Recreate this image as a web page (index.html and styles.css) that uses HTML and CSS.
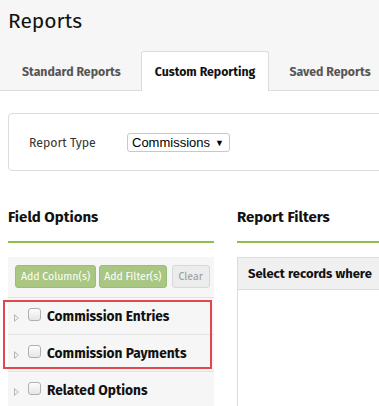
FILE: index.html
```html
<!DOCTYPE html>
<html>
<head>
<meta charset="utf-8">
<link rel="stylesheet" href="styles.css">
</head>
<body>
<div class="top">
  <h1 class="title">Reports</h1>
  <div class="tabs">
    <div class="tab">Standard Reports</div>
    <div class="tab active">Custom Reporting</div>
    <div class="tab">Saved Reports</div>
  </div>
</div>
<div class="content">
  <div class="type-box">
    <span class="type-label">Report Type</span>
    <span class="select">Commissions <span class="arrow">▼</span></span>
  </div>
  <div class="columns">
    <div class="col-left">
      <h2 class="heading">Field Options</h2>
      <div class="panel">
        <div class="btn-row">
          <span class="btn green">Add Column(s)</span>
          <span class="btn green">Add Filter(s)</span>
          <span class="btn grey">Clear</span>
        </div>
        <div class="row"><span class="tri"></span><span class="cb"></span><span class="lbl">Commission Entries</span></div>
        <div class="row"><span class="tri"></span><span class="cb"></span><span class="lbl">Commission Payments</span></div>
        <div class="row"><span class="tri"></span><span class="cb"></span><span class="lbl">Related Options</span></div>
        <div class="highlight"></div>
      </div>
    </div>
    <div class="col-right">
      <h2 class="heading">Report Filters</h2>
      <div class="filter-panel">
        <div class="filter-head">Select records where</div>
      </div>
    </div>
  </div>
</div>
</body>
</html>
```
FILE: styles.css
```css
html, body {
  margin: 0;
  padding: 0;
  background: #fff;
  font-family: "Fira Sans", Lato, "Open Sans", sans-serif;
  overflow: hidden;
}
.top {
  background: #f6f6f6;
  padding: 8px 0 0 8px;
  border-bottom: 1px solid #dcdcdc;
}
.title {
  margin: 0;
  font-size: 21px;
  font-weight: 400;
  line-height: 26px;
  color: #111;
}
.tabs {
  display: flex;
  margin-top: 17px;
  margin-bottom: -1px;
  white-space: nowrap;
}
.tab {
  padding: 0 13px;
  margin-right: 6px;
  height: 38px;
  line-height: 40px;
  font-size: 12.3px;
  font-weight: 700;
  color: #555;
  border: 1px solid transparent;
  border-bottom: none;
}
.tab.active {
  background: #fff;
  color: #111;
  border-color: #dcdcdc;
  border-radius: 3px 3px 0 0;
  height: 39px;
}
.content {
  padding: 22px 0 0 8px;
}
.type-box {
  width: 420px;
  height: 56px;
  border: 1px solid #dcdcdc;
  border-radius: 4px;
  display: flex;
  align-items: center;
  box-sizing: content-box;
}
.type-label {
  margin-left: 20px;
  width: 98px;
  font-size: 12.3px;
  color: #333;
}
.select {
  display: inline-flex;
  align-items: center;
  height: 17px;
  padding: 0 5px 0 4px;
  border: 1px solid #c8c8c8;
  border-radius: 3px;
  font-family: "Liberation Sans", Arial, sans-serif;
  font-size: 13px;
  color: #000;
  background: #fff;
  margin-top: 1px;
}
.arrow {
  font-size: 9px;
  margin-left: 5px;
}
.columns {
  display: flex;
  gap: 23px;
  margin-top: 36px;
}
.col-left {
  width: 206px;
  flex: none;
}
.col-right {
  flex: none;
  width: 200px;
}
.heading {
  margin: 0;
  font-size: 15px;
  font-weight: 700;
  line-height: 20px;
  color: #111;
  padding-bottom: 14px;
  border-bottom: 2px solid #8fbf4a;
}
.panel {
  position: relative;
  margin-top: 14px;
  background: #f6f6f6;
  height: 160px;
}
.btn-row {
  display: flex;
  padding: 8px 7px 9px 7px;
  border-bottom: 1px solid #e4e4e4;
}
.btn {
  height: 21px;
  line-height: 21px;
  border-radius: 3px;
  font-size: 10.5px;
  padding: 0 5px;
  white-space: nowrap;
}
.btn.green {
  background: #a9c782;
  border: 1px solid #9dbd74;
  color: #fff;
  margin-right: 3px;
}
.btn.green + .btn.green {
  padding: 0 4px;
}
.btn.grey {
  background: #ececec;
  border: 1px solid #d8d8d8;
  color: #999;
  margin-left: 2px;
  padding: 0 6px;
}
.row {
  display: flex;
  align-items: center;
  height: 36px;
  border-bottom: 1px solid #e4e4e4;
  padding-left: 6px;
}
.tri {
  width: 0;
  height: 0;
  border-left: 5px solid #b5b5b5;
  border-top: 4px solid transparent;
  border-bottom: 4px solid transparent;
  margin-top: 4px;
  position: relative;
  margin-right: 9px;
}
.tri::after {
  content: "";
  position: absolute;
  left: -4px;
  top: -2px;
  border-left: 3px solid #f6f6f6;
  border-top: 2px solid transparent;
  border-bottom: 2px solid transparent;
}
.cb {
  width: 11px;
  height: 11px;
  border: 1px solid #b0b0b0;
  border-radius: 3px;
  background: linear-gradient(#fdfdfd, #e6e6e6);
  margin-right: 6px;
  margin-top: -4px;
}
.lbl {
  font-size: 13.7px;
  font-weight: 700;
  color: #111;
}
.highlight {
  position: absolute;
  left: -5px;
  top: 43px;
  width: 205px;
  height: 65px;
  border: 2px solid #e2474b;
}
.filter-panel {
  margin-top: 14px;
  border: 1px solid #dcdcdc;
  height: 200px;
}
.filter-head {
  background: #f0f0f0;
  border-bottom: 1px solid #dcdcdc;
  height: 31px;
  line-height: 31px;
  padding-left: 10px;
  font-size: 13px;
  font-weight: 700;
  color: #111;
  white-space: nowrap;
}
```
